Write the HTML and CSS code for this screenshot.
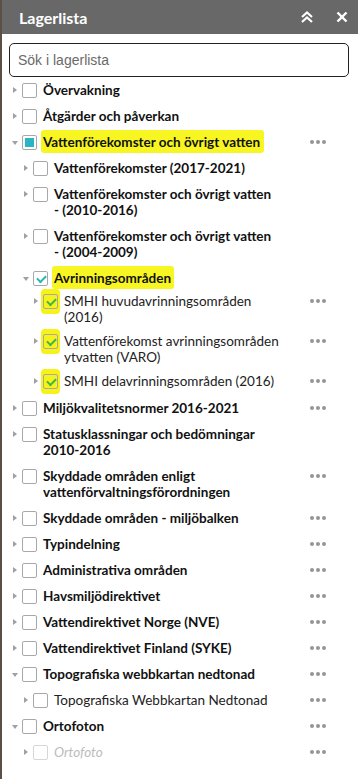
FILE: index.html
```html
<!DOCTYPE html>
<html lang="sv">
<head>
  <meta charset="UTF-8">
  <meta name="viewport" content="width=device-width, initial-scale=1.0">
  <title>Lagerlista</title>
  <link rel="stylesheet" href="styles.css">
</head>
<body>

<div class="panel">
  <header class="panel-header">
    <h1>Lagerlista</h1>
    <div class="header-tools">
      <svg class="tool-icon" width="14" height="12" viewBox="0 0 14 12">
        <polyline points="2,6 7,1.5 12,6" fill="none" stroke="#fff" stroke-width="2.2"/>
        <polyline points="2,11 7,6.5 12,11" fill="none" stroke="#fff" stroke-width="2.2"/>
      </svg>
      <svg class="tool-icon" width="12" height="12" viewBox="0 0 12 12">
        <line x1="1.5" y1="1.5" x2="10.5" y2="10.5" stroke="#fff" stroke-width="2.4"/>
        <line x1="10.5" y1="1.5" x2="1.5" y2="10.5" stroke="#fff" stroke-width="2.4"/>
      </svg>
    </div>
  </header>

  <div class="search">
    <input type="text" placeholder="Sök i lagerlista">
  </div>

  <ul class="layers">
    <li class="layer"><span class="caret"></span><span class="check"></span><span class="name">Övervakning</span><span class="more none"></span></li>
    <li class="layer"><span class="caret"></span><span class="check"></span><span class="name">Åtgärder och påverkan</span><span class="more none"></span></li>
    <li class="layer"><span class="caret open"></span><span class="check partial"></span><span class="name"><mark class="hl hl-wide">Vattenförekomster och övrigt vatten</mark></span><span class="more"><i></i><i></i><i></i></span></li>

    <li class="layer lvl1"><span class="caret"></span><span class="check"></span><span class="name">Vattenförekomster (2017-2021)</span><span class="more none"></span></li>
    <li class="layer lvl1"><span class="caret"></span><span class="check"></span><span class="name">Vattenförekomster och övrigt vatten<br>- (2010-2016)</span><span class="more none"></span></li>
    <li class="layer lvl1"><span class="caret"></span><span class="check"></span><span class="name">Vattenförekomster och övrigt vatten<br>- (2004-2009)</span><span class="more none"></span></li>
    <li class="layer lvl1"><span class="caret open"></span><span class="check checked"></span><span class="name"><mark class="hl">Avrinningsområden</mark></span><span class="more none"></span></li>

    <li class="layer lvl2 sub"><span class="caret"></span><span class="check checked marked"></span><span class="name">SMHI huvudavrinningsområden<br>(2016)</span><span class="more"><i></i><i></i><i></i></span></li>
    <li class="layer lvl2 sub"><span class="caret"></span><span class="check checked marked"></span><span class="name">Vattenförekomst avrinningsområden<br>ytvatten (VARO)</span><span class="more"><i></i><i></i><i></i></span></li>
    <li class="layer lvl2 sub"><span class="caret"></span><span class="check checked marked"></span><span class="name">SMHI delavrinningsområden (2016)</span><span class="more"><i></i><i></i><i></i></span></li>

    <li class="layer"><span class="caret"></span><span class="check"></span><span class="name">Miljökvalitetsnormer 2016-2021</span><span class="more"><i></i><i></i><i></i></span></li>
    <li class="layer"><span class="caret"></span><span class="check"></span><span class="name">Statusklassningar och bedömningar<br>2010-2016</span><span class="more none"></span></li>
    <li class="layer"><span class="caret"></span><span class="check"></span><span class="name">Skyddade områden enligt<br>vattenförvaltningsförordningen</span><span class="more"><i></i><i></i><i></i></span></li>
    <li class="layer"><span class="caret"></span><span class="check"></span><span class="name">Skyddade områden - miljöbalken</span><span class="more"><i></i><i></i><i></i></span></li>
    <li class="layer"><span class="caret"></span><span class="check"></span><span class="name">Typindelning</span><span class="more"><i></i><i></i><i></i></span></li>
    <li class="layer"><span class="caret"></span><span class="check"></span><span class="name">Administrativa områden</span><span class="more"><i></i><i></i><i></i></span></li>
    <li class="layer"><span class="caret"></span><span class="check"></span><span class="name">Havsmiljödirektivet</span><span class="more"><i></i><i></i><i></i></span></li>
    <li class="layer"><span class="caret"></span><span class="check"></span><span class="name">Vattendirektivet Norge (NVE)</span><span class="more"><i></i><i></i><i></i></span></li>
    <li class="layer"><span class="caret"></span><span class="check"></span><span class="name">Vattendirektivet Finland (SYKE)</span><span class="more"><i></i><i></i><i></i></span></li>
    <li class="layer"><span class="caret open"></span><span class="check"></span><span class="name">Topografiska webbkartan nedtonad</span><span class="more"><i></i><i></i><i></i></span></li>
    <li class="layer lvl1 sub"><span class="caret"></span><span class="check"></span><span class="name">Topografiska Webbkartan Nedtonad</span><span class="more"><i></i><i></i><i></i></span></li>
    <li class="layer"><span class="caret open"></span><span class="check"></span><span class="name">Ortofoton</span><span class="more"><i></i><i></i><i></i></span></li>
    <li class="layer lvl1 sub disabled"><span class="caret"></span><span class="check"></span><span class="name">Ortofoto</span><span class="more"><i></i><i></i><i></i></span></li>
  </ul>
</div>

</body>
</html>
```

FILE: styles.css
```css
body {
  margin: 0;
  background: #fff;
  font-family: Lato, "Open Sans", sans-serif;
}

.panel {
  width: 356px;
  min-height: 779px;
  border-left: 2px solid #5b5048;
  background: #fff;
}

/* header bar */
.panel-header {
  display: flex;
  align-items: center;
  height: 34px;
  padding: 0 10px 0 17px;
  background: #686868;
}

.panel-header h1 {
  flex: 1;
  margin: 0;
  color: #fff;
  font-size: 16px;
  font-weight: bold;
}

.header-tools {
  display: flex;
  align-items: center;
  gap: 22px;
}

.tool-icon {
  display: block;
}

/* search */
.search {
  padding: 9px 7px 0 7px;
}

.search input {
  box-sizing: border-box;
  width: 340px;
  height: 34px;
  padding: 0 8px;
  border: 1px solid #222;
  border-radius: 5px;
  font-family: "Liberation Sans", Arial, sans-serif;
  font-size: 14px;
  color: #333;
  outline: none;
}

.search input::placeholder {
  color: #6a6a6a;
}

/* layer tree */
.layers {
  list-style: none;
  margin: 0;
  padding: 0;
}

.layer {
  display: flex;
  align-items: flex-start;
  padding: 5px 0 5px 8px;
  font-size: 13.5px;
  line-height: 16px;
  font-weight: bold;
  color: #111;
}

.layer.lvl1 {
  padding-left: 19px;
}

.layer.lvl2 {
  padding: 2px 0 6px 29px;
}

.layer.sub {
  font-weight: normal;
  color: #222;
}

.caret {
  flex: none;
  position: relative;
  width: 12px;
  height: 16px;
}

.caret::before {
  content: "";
  position: absolute;
  left: 3px;
  top: 4.5px;
  border-left: 4px solid #a0a0a0;
  border-top: 3.5px solid transparent;
  border-bottom: 3.5px solid transparent;
}

.caret.open::before {
  left: 2px;
  top: 6.5px;
  border-top: 4px solid #a0a0a0;
  border-left: 3px solid transparent;
  border-right: 3px solid transparent;
  border-bottom: 0;
}

.check {
  flex: none;
  position: relative;
  box-sizing: border-box;
  width: 15px;
  height: 15px;
  margin-top: 0.5px;
  border: 1px solid #a8a8a8;
  border-radius: 2px;
  background: #fff;
}

.check.partial::after {
  content: "";
  position: absolute;
  left: 2px;
  top: 2px;
  width: 9px;
  height: 9px;
  background: #2bb5c4;
}

.check.checked::after {
  content: "";
  position: absolute;
  left: 3px;
  top: 1px;
  width: 7px;
  height: 4px;
  border-left: 2px solid #28b4b4;
  border-bottom: 2px solid #28b4b4;
  transform: translate(0, 2px) rotate(-45deg);
}

.check.marked {
  background: #f6f21a;
  box-shadow: 0 -3px 0 2px #f6f21a, 0 3px 0 2px #f6f21a;
}

.check.marked::after {
  border-color: #3bb54a;
}

.name {
  flex: 1;
  min-width: 0;
  padding-left: 6px;
}

.disabled .name {
  font-style: italic;
  color: #bdbdbd;
}

.disabled .check {
  border-color: #d6d6d6;
}

.hl {
  margin-left: -2px;
  padding: 4px 3px 3px 2px;
  background: #f8f622;
  color: inherit;
  border-radius: 3px;
}

.hl-wide {
  padding-right: 4px;
}

.more {
  flex: none;
  display: flex;
  align-items: center;
  gap: 2px;
  width: 16px;
  height: 16px;
  margin: 0 32px 0 10px;
}

.more i {
  display: block;
  width: 4px;
  height: 4px;
  border-radius: 50%;
  background: #959595;
}

.more.none i {
  display: none;
}
```
